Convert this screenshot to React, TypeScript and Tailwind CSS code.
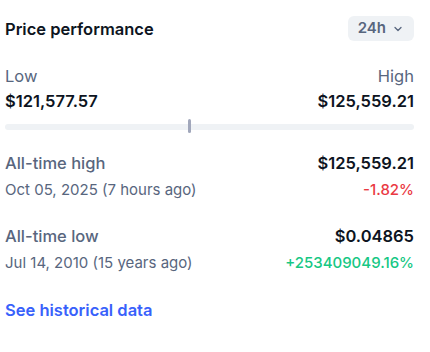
import React from "react";

export default function App() {
  return (
    <div className="w-[430px] h-[352px] bg-white" style={{ fontFamily: "Inter, 'Noto Sans', sans-serif" }}>
      <div className="pl-[5px] pr-[16px] pt-[16px]">
        <div className="flex items-center justify-between h-[25px]">
          <div className="text-[16.5px] font-semibold text-[#0d1421] leading-[24px]">Price performance</div>
          <button className="flex items-center gap-[7px] h-[25px] pl-[10px] pr-[11px] rounded-[6px] bg-[#eff2f5] text-[15px] font-semibold text-[#58667e]">
            <span>24h</span>
            <svg width="10" height="10" viewBox="0 0 10 10" fill="none">
              <path d="M2 3.5L5 6.5L8 3.5" stroke="#58667e" strokeWidth="1.3" strokeLinecap="round" strokeLinejoin="round" />
            </svg>
          </button>
        </div>

        <div className="mt-[23px] flex justify-between text-[16.5px] leading-[24px] text-[#58667e]">
          <span>Low</span>
          <span>High</span>
        </div>
        <div className="mt-[1px] flex justify-between text-[16.5px] leading-[24px] font-semibold text-[#0d1421]">
          <span>$121,577.57</span>
          <span>$125,559.21</span>
        </div>

        <div className="relative mt-[11px] h-[6px] rounded-full bg-[#eff2f5]">
          <div className="absolute left-[183px] top-[-5px] w-[3px] h-[14px] rounded-[2px] bg-[#a1a7bb]" />
        </div>

        <div className="mt-[21px] flex justify-between text-[16.5px] leading-[24px]">
          <span className="text-[#58667e] font-medium">All-time high</span>
          <span className="font-semibold text-[#0d1421]">$125,559.21</span>
        </div>
        <div className="mt-[4px] flex justify-between text-[15px] leading-[22px]">
          <span className="text-[#58667e]">Oct 05, 2025 (7 hours ago)</span>
          <span className="text-[#ea3943] font-medium">-1.82%</span>
        </div>

        <div className="mt-[23px] flex justify-between text-[16.5px] leading-[24px]">
          <span className="text-[#58667e] font-medium">All-time low</span>
          <span className="font-semibold text-[#0d1421]">$0.04865</span>
        </div>
        <div className="mt-[4px] flex justify-between text-[15px] leading-[22px]">
          <span className="text-[#58667e]">Jul 14, 2010 (15 years ago)</span>
          <span className="text-[#16c784] font-medium">+253409049.16%</span>
        </div>

        <div className="mt-[24px] text-[16.5px] leading-[24px] font-semibold text-[#3861fb]">See historical data</div>
      </div>
    </div>
  );
}
